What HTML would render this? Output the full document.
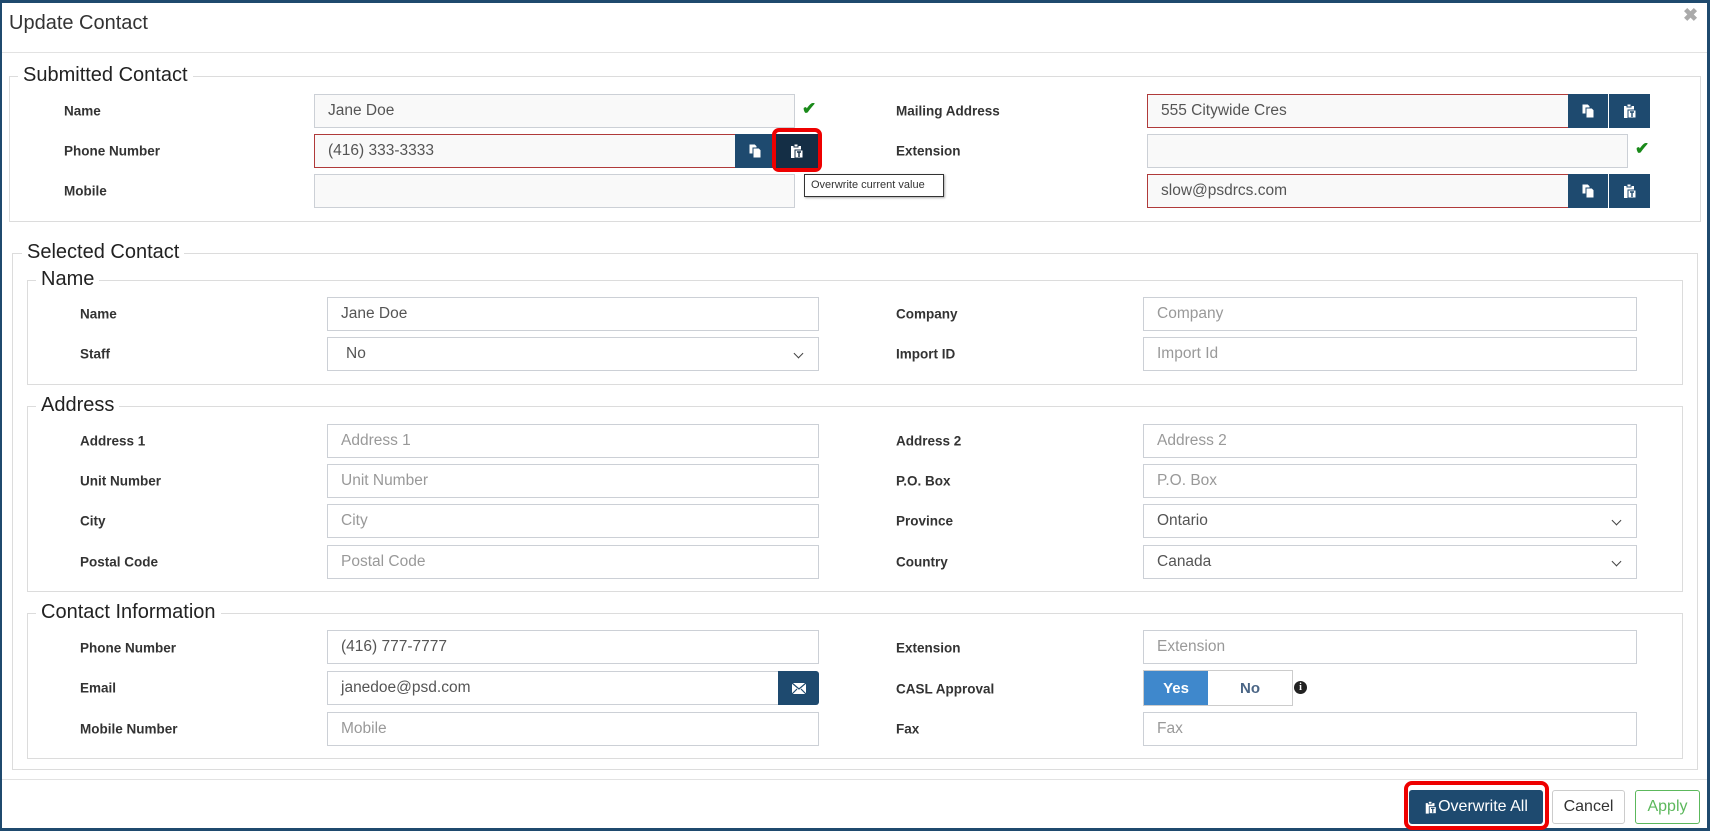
<!DOCTYPE html>
<html><head><meta charset="utf-8">
<style>
*{box-sizing:border-box;margin:0;padding:0}
body{width:1710px;height:831px;overflow:hidden;background:#fff;font-family:"Liberation Sans",sans-serif;position:relative}
.a{position:absolute}
.frame{left:0;top:0;width:1710px;height:831px;border:3px solid #1f4a6e;border-left-width:2px}
.lbl{position:absolute;font-size:13.5px;font-weight:bold;color:#333;transform:translateY(-50%)}
.inp{position:absolute;border:1px solid #ccd0d6;background:#fff;font-size:15.5px;color:#555;padding-left:13px;display:flex;align-items:center}
.ro{background:#f9f9f9;height:34px}
.err{border-color:#b03a3a}
.ph{color:#999}
.fs{position:absolute;border:1px solid #dcdcdc}
.lg{position:absolute;background:#fff;padding:0 5px;color:#222;line-height:22px}
.btn{position:absolute;background:#1e4a6f;display:flex;align-items:center;justify-content:center}
.chk{position:absolute;color:#1a8a1a;font-size:17px;font-weight:bold}
.sel::after{content:"";position:absolute;right:16px;top:12px;width:6px;height:6px;border-right:1.6px solid #444;border-bottom:1.6px solid #444;transform:rotate(45deg)}
</style></head><body>
<div class="a frame"></div>
<div class="a" style="left:9px;top:12px;font-size:20px;color:#333">Update Contact</div>
<div class="a" style="left:1683px;top:5px;font-size:18px;color:#aaa;font-weight:bold">✖</div>
<div class="a" style="left:2px;top:52px;width:1705px;height:1px;background:#e2e2e2"></div>

<div class="fs" style="left:9px;top:76px;width:1692px;height:146px"></div>
<div class="lg" style="left:18px;top:64px;font-size:20px">Submitted Contact</div>

<div class="lbl" style="left:64px;top:111px">Name</div>
<div class="inp ro" style="left:314px;top:94px;width:481px">Jane Doe</div>
<div class="chk" style="left:802px;top:99px">✔</div>

<div class="lbl" style="left:64px;top:151px">Phone Number</div>
<div class="inp ro err" style="left:314px;top:134px;width:422px">(416) 333-3333</div>
<div class="btn" style="left:735px;top:134px;width:39px;height:34px"><svg width="16" height="16" viewBox="0 0 16 16"><path d="M2 1h6l2 2v8H2z" fill="#fff" stroke="#1e4a6f"/><path d="M6 5h6l2 2v8H6z" fill="#fff" stroke="#1e4a6f"/></svg></div>
<div class="a" style="left:772px;top:128px;width:50px;height:44px;border:4px solid #e00;border-radius:7px"></div>
<div class="btn" style="left:776px;top:134px;width:42px;height:34px;background:#142e45"><svg width="16" height="16" viewBox="0 0 16 16"><rect x="2" y="3" width="10" height="12" fill="#fff"/><rect x="5" y="1" width="4" height="3" fill="#fff" stroke="#142e45"/><rect x="6" y="7" width="8" height="8" fill="#fff" stroke="#142e45"/><path d="M8 9h4M10 9v5" stroke="#142e45" stroke-width="1.4"/></svg></div>

<div class="lbl" style="left:64px;top:191px">Mobile</div>
<div class="inp ro" style="left:314px;top:174px;width:481px"></div>
<div class="a" style="left:804px;top:174px;width:140px;height:23px;border:1px solid #333;background:#fff;font-size:11px;color:#333;padding:4px 0 0 6px;box-shadow:1px 1px 2px #aaa">Overwrite current value</div>

<div class="lbl" style="left:896px;top:111px">Mailing Address</div>
<div class="inp ro err" style="left:1147px;top:94px;width:422px">555 Citywide Cres</div>
<div class="btn" style="left:1568px;top:94px;width:40px;height:34px"><svg width="16" height="16" viewBox="0 0 16 16"><path d="M2 1h6l2 2v8H2z" fill="#fff" stroke="#1e4a6f"/><path d="M6 5h6l2 2v8H6z" fill="#fff" stroke="#1e4a6f"/></svg></div>
<div class="btn" style="left:1609px;top:94px;width:41px;height:34px"><svg width="16" height="16" viewBox="0 0 16 16"><rect x="2" y="3" width="10" height="12" fill="#fff"/><rect x="5" y="1" width="4" height="3" fill="#fff" stroke="#1e4a6f"/><rect x="6" y="7" width="8" height="8" fill="#fff" stroke="#1e4a6f"/><path d="M8 9h4M10 9v5" stroke="#1e4a6f" stroke-width="1.4"/></svg></div>

<div class="lbl" style="left:896px;top:151px">Extension</div>
<div class="inp ro" style="left:1147px;top:134px;width:481px"></div>
<div class="chk" style="left:1635px;top:139px">✔</div>

<div class="inp ro err" style="left:1147px;top:174px;width:422px">slow@psdrcs.com</div>
<div class="btn" style="left:1568px;top:174px;width:40px;height:34px"><svg width="16" height="16" viewBox="0 0 16 16"><path d="M2 1h6l2 2v8H2z" fill="#fff" stroke="#1e4a6f"/><path d="M6 5h6l2 2v8H6z" fill="#fff" stroke="#1e4a6f"/></svg></div>
<div class="btn" style="left:1609px;top:174px;width:41px;height:34px"><svg width="16" height="16" viewBox="0 0 16 16"><rect x="2" y="3" width="10" height="12" fill="#fff"/><rect x="5" y="1" width="4" height="3" fill="#fff" stroke="#1e4a6f"/><rect x="6" y="7" width="8" height="8" fill="#fff" stroke="#1e4a6f"/><path d="M8 9h4M10 9v5" stroke="#1e4a6f" stroke-width="1.4"/></svg></div>

<div class="fs" style="left:12px;top:253px;width:1686px;height:517px"></div>
<div class="lg" style="left:22px;top:241px;font-size:20px">Selected Contact</div>

<div class="fs" style="left:27px;top:280px;width:1656px;height:105px"></div>
<div class="lg" style="left:36px;top:268px;font-size:20px">Name</div>
<div class="lbl" style="left:80px;top:314px">Name</div>
<div class="inp" style="left:327px;top:297px;width:492px;height:34px">Jane Doe</div>
<div class="lbl" style="left:80px;top:354px">Staff</div>
<div class="inp sel" style="left:327px;top:337px;width:492px;height:34px;padding-left:18px">No</div>
<div class="lbl" style="left:896px;top:314px">Company</div>
<div class="inp ph" style="left:1143px;top:297px;width:494px;height:34px">Company</div>
<div class="lbl" style="left:896px;top:354px">Import ID</div>
<div class="inp ph" style="left:1143px;top:337px;width:494px;height:34px">Import Id</div>

<div class="fs" style="left:27px;top:406px;width:1656px;height:186px"></div>
<div class="lg" style="left:36px;top:394px;font-size:20px">Address</div>
<div class="lbl" style="left:80px;top:441px">Address 1</div>
<div class="inp ph" style="left:327px;top:424px;width:492px;height:34px">Address 1</div>
<div class="lbl" style="left:80px;top:481px">Unit Number</div>
<div class="inp ph" style="left:327px;top:464px;width:492px;height:34px">Unit Number</div>
<div class="lbl" style="left:80px;top:521px">City</div>
<div class="inp ph" style="left:327px;top:504px;width:492px;height:34px">City</div>
<div class="lbl" style="left:80px;top:562px">Postal Code</div>
<div class="inp ph" style="left:327px;top:545px;width:492px;height:34px">Postal Code</div>
<div class="lbl" style="left:896px;top:441px">Address 2</div>
<div class="inp ph" style="left:1143px;top:424px;width:494px;height:34px">Address 2</div>
<div class="lbl" style="left:896px;top:481px">P.O. Box</div>
<div class="inp ph" style="left:1143px;top:464px;width:494px;height:34px">P.O. Box</div>
<div class="lbl" style="left:896px;top:521px">Province</div>
<div class="inp sel" style="left:1143px;top:504px;width:494px;height:34px">Ontario</div>
<div class="lbl" style="left:896px;top:562px">Country</div>
<div class="inp sel" style="left:1143px;top:545px;width:494px;height:34px">Canada</div>

<div class="fs" style="left:27px;top:613px;width:1656px;height:146px"></div>
<div class="lg" style="left:36px;top:601px;font-size:20px">Contact Information</div>
<div class="lbl" style="left:80px;top:648px">Phone Number</div>
<div class="inp" style="left:327px;top:630px;width:492px;height:34px">(416) 777-7777</div>
<div class="lbl" style="left:80px;top:688px">Email</div>
<div class="inp" style="left:327px;top:671px;width:452px;height:34px">janedoe@psd.com</div>
<div class="btn" style="left:778px;top:671px;width:41px;height:34px;border-radius:0 3px 3px 0"><svg width="16" height="13" viewBox="0 0 16 13"><rect x="1" y="1" width="14" height="11" fill="#fff"/><path d="M1 1l7 6 7-6M1 12l5-5M15 12l-5-5" fill="none" stroke="#1e4a6f" stroke-width="1.2"/></svg></div>
<div class="lbl" style="left:80px;top:729px">Mobile Number</div>
<div class="inp ph" style="left:327px;top:712px;width:492px;height:34px">Mobile</div>
<div class="lbl" style="left:896px;top:648px">Extension</div>
<div class="inp ph" style="left:1143px;top:630px;width:494px;height:34px">Extension</div>
<div class="lbl" style="left:896px;top:689px">CASL Approval</div>
<div class="a" style="left:1143px;top:670px;width:150px;height:36px;border:1px solid #ccc"></div>
<div class="a" style="left:1144px;top:671px;width:64px;height:34px;background:#3f88cc;color:#fff;font-size:15px;font-weight:bold;display:flex;align-items:center;justify-content:center">Yes</div>
<div class="a" style="left:1208px;top:671px;width:84px;height:34px;color:#4a6585;font-size:15px;font-weight:bold;display:flex;align-items:center;justify-content:center">No</div>
<div class="a" style="left:1294px;top:681px;width:13px;height:13px;border-radius:50%;background:#222;color:#fff;font-size:10px;font-weight:bold;text-align:center;line-height:13px;font-family:'Liberation Serif',serif">i</div>
<div class="lbl" style="left:896px;top:729px">Fax</div>
<div class="inp ph" style="left:1143px;top:712px;width:494px;height:34px">Fax</div>

<div class="a" style="left:2px;top:779px;width:1705px;height:1px;background:#e2e2e2"></div>
<div class="a" style="left:1404px;top:781px;width:145px;height:49px;border:4px solid #e00;border-radius:8px"></div>
<div class="a" style="left:1409px;top:790px;width:134px;height:34px;background:#1e4a6f;border-radius:3px;color:#fff;font-size:16px;display:flex;align-items:center;justify-content:center"><svg width="14" height="15" viewBox="0 0 16 16"><rect x="2" y="3" width="10" height="12" fill="#fff"/><rect x="5" y="1" width="4" height="3" fill="#fff" stroke="#1e4a6f"/><rect x="6" y="7" width="8" height="8" fill="#fff" stroke="#1e4a6f"/><path d="M8 9h4M10 9v5" stroke="#1e4a6f" stroke-width="1.4"/></svg>Overwrite All</div>
<div class="a" style="left:1552px;top:790px;width:73px;height:34px;border:1px solid #ccc;border-radius:3px;color:#333;font-size:16px;display:flex;align-items:center;justify-content:center">Cancel</div>
<div class="a" style="left:1635px;top:790px;width:65px;height:34px;border:1px solid #5cb85c;border-radius:3px;color:#5cb85c;font-size:16px;display:flex;align-items:center;justify-content:center">Apply</div>
</body></html>
